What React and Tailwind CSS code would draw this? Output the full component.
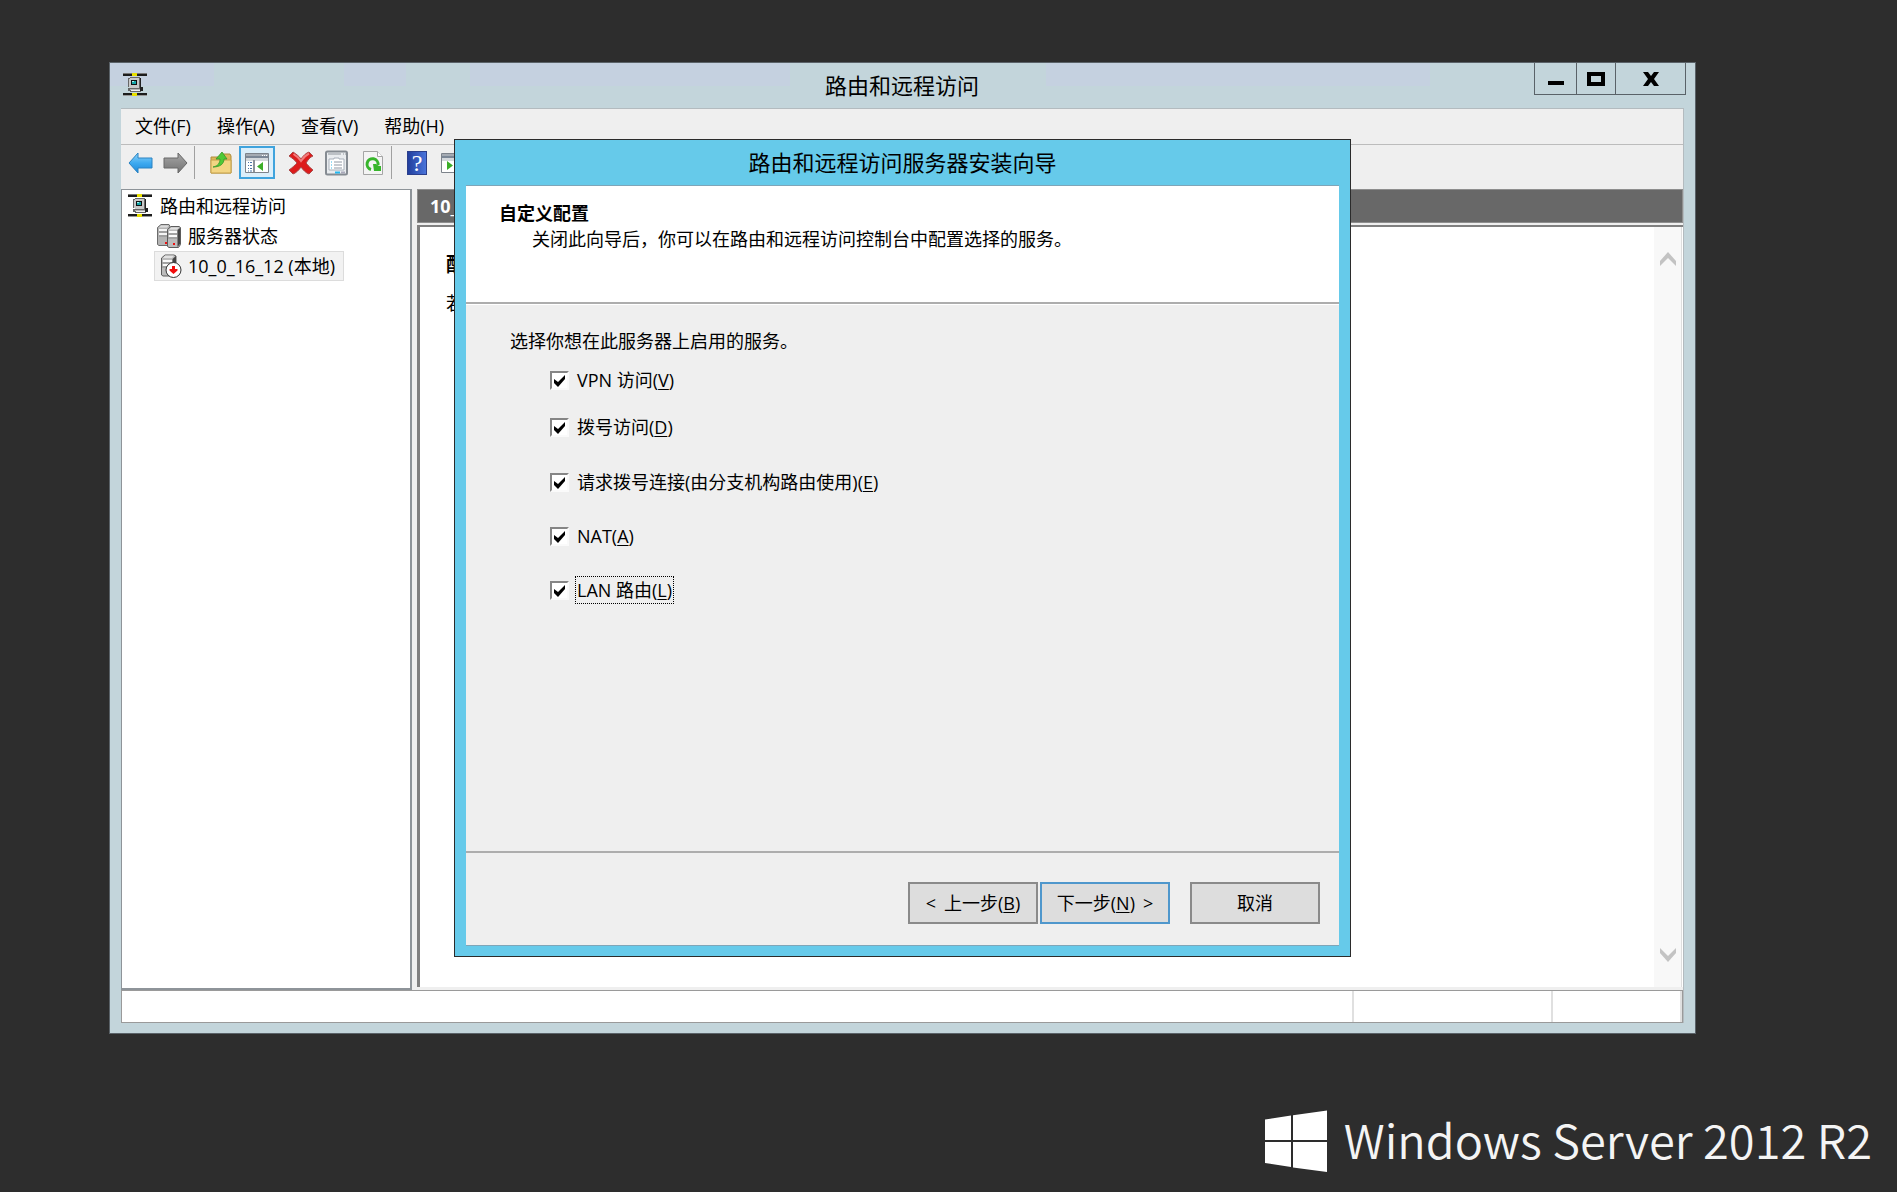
import { useState } from 'react';

const menus = ["文件(F)", "操作(A)", "查看(V)", "帮助(H)"];

const services = [
  { id: "vpn", label: "VPN 访问", accessKey: "V", className: "mb-[19px]" },
  { id: "dialup", label: "拨号访问", accessKey: "D", className: "mb-[27px]" },
  { id: "demand", label: "请求拨号连接(由分支机构路由使用)", accessKey: "E", className: "mb-[26px]" },
  { id: "nat", label: "NAT", accessKey: "A", className: "mb-[26px]" },
  { id: "lan", label: "LAN 路由", accessKey: "L", className: "" },
];

function NetworkIcon() {
  return (
    <svg width="24" height="24" viewBox="0 0 24 24" shapeRendering="crispEdges" aria-hidden="true">
      <path d="M0 0h24v1H0z" fill="#777" />
      <path d="M0 1h24v2H0zM0 20h24v2H0z" fill="#1c1c1c" />
      <path d="M0 22h24v1H0z" fill="#999" />
      <path d="M9 0h5v3H9zM9 20h5v3H9z" fill="#e8e000" />
      <path d="M7 4h10v1h1v9h1v4h-1v1H7v-1H5v-3h2v-1H5V5h2z" fill="#666" />
      <path d="M17 5h1v9h2v4h-3z" fill="#222" />
      <path d="M7 5h9v10H7zM6 6h10v8H6z" fill="#c9c9c9" />
      <path d="M8 7h6v5H8z" fill="#111" />
      <path d="M9 8h4v3H9z" fill="#16a5a8" />
      <path d="M9 8h2v1H9z" fill="#a8f0ee" />
      <path d="M7 16h10v1H7z" fill="#b5b5b5" />
      <path d="M8 17h9v1H8z" fill="#eee" />
    </svg>
  );
}

function ServersIcon() {
  return (
    <svg width="24" height="24" viewBox="0 0 24 24" aria-hidden="true">
      <path d="M.5 3.500 4 .500h8l1 2v18l-2 1H2l-1.500-1z" fill="#b4b4b4" stroke="#6b6b6b" />
      <path d="M4 1.500h8l-2 2H2z" fill="#ddd" />
      <path d="M2 6h8M2 10h8" stroke="#f5f5f5" strokeWidth="2" />
      <path d="M2 8h9M2 12h9" stroke="#8a8a8a" />
      <path d="M10.500 5.500 14 2.500h8l1.500 1v17l-2 3h-9.500l-1.500-1z" fill="#bcbcbc" stroke="#5c5c5c" />
      <path d="M14 3.500h8l-2 2h-8z" fill="#e2e2e2" />
      <path d="M20.500 6 23 4v16l-2.500 3z" fill="#444" />
      <path d="M12 8h8M12 12h8" stroke="#fafafa" strokeWidth="2" />
      <path d="M11 10h9M11 14h9" stroke="#8a8a8a" />
      <path d="M8 18h2v2H8zM16 19h2v2h-2z" fill="#e11" />
    </svg>
  );
}

function ServerDownIcon() {
  return (
    <svg width="22" height="24" viewBox="0 0 22 24" aria-hidden="true">
      <path d="M1.500 4 5 1h9l2 1v19l-2 1H3l-1.500-1z" fill="#bcbcbc" stroke="#5c5c5c" />
      <path d="M5 1.500h9l-2 2.500H3z" fill="#e2e2e2" />
      <path d="M12.500 5 16 2v8h-3.500z" fill="#444" />
      <path d="M3 7h9M3 11h9" stroke="#fafafa" strokeWidth="2" />
      <path d="M2 9h10M2 13h8" stroke="#8a8a8a" />
      <circle cx="13.500" cy="16" r="7.500" fill="#fff" stroke="#333" />
      <path d="M12 12h3v3h2.500v1.500l-4 3.500-4-3.500V15H12z" fill="#f20d0d" />
    </svg>
  );
}

function ArrowIcon({ forward }) {
  return (
    <svg width="26" height="24" viewBox="0 0 26 24" aria-hidden="true">
      <defs>
        <linearGradient id={forward ? "fwd" : "back"} x1="0" y1="0" x2="0" y2="1">
          <stop offset="0" stopColor={forward ? "#a8a8a8" : "#8fd3f8"} />
          <stop offset="0.5" stopColor={forward ? "#8c8c8c" : "#3eaaf0"} />
          <stop offset="1" stopColor={forward ? "#747474" : "#1b86d8"} />
        </linearGradient>
      </defs>
      <path
        d={forward ? "M24 12 15 2v5H1v10h14v5z" : "M2 12 11 2v5h14v10H11v5z"}
        fill={forward ? "url(#fwd)" : "url(#back)"}
        stroke={forward ? "#686868" : "#2a83c2"}
        strokeLinejoin="round"
      />
    </svg>
  );
}

function FolderUpIcon() {
  return (
    <svg width="24" height="24" viewBox="0 0 24 24" aria-hidden="true">
      <path d="M2 6h10l1-3h8l1 2v17H2z" fill="#dcb75a" stroke="#b08c38" />
      <path d="M2 9h20v13H2z" fill="#f3d583" stroke="#c6a14a" />
      <path d="M4 16c5-1 7-4 7-8H7l6-7 5 7h-3c0 5-4 8-11 8z" fill="#4fc936" stroke="#35952a" strokeWidth="0.800" />
    </svg>
  );
}

function ConsoleIcon({ play }) {
  return (
    <svg width="24" height="20" viewBox="0 0 24 20" aria-hidden="true">
      <path d="M.5.500h23v19H.5z" fill="#fff" stroke="#7d838b" />
      <path d="M1 1h22v2H1z" fill="#a5abb3" />
      <path d="M1 3h22v2H1z" fill="#7b8796" />
      <path d="M17 2h1v1h-1zM19 2h1v1h-1zM21 2h1v1h-1z" fill="#fff" />
      <path d="M1 5h22v3H1z" fill="#d4d8dc" />
      {!play && <path d="M9 7v12" stroke="#8d939b" strokeWidth="2" />}
      {!play && <path d="M3 9.500h4M3 12.500h4M3 15.500h4M3 18h4" stroke="#4b74a8" strokeDasharray="1 1 3" />}
      {play ? <path d="M6 8v9l6-4.500z" fill="#3cae28" /> : <path d="M18 9v9l-6-4.500z" fill="#3cae28" />}
    </svg>
  );
}

function DeleteIcon() {
  return (
    <svg width="26" height="26" viewBox="0 0 26 26" aria-hidden="true">
      <path
        d="M5 2c3 2 6 4 8 7 2-3 5-6 8-7l4 4c-3 1-5 4-7 7 2 2 4 5 7 7l-4 4c-3-1-6-4-8-7-2 3-5 6-8 7l-4-4c3-2 6-5 8-7-2-3-5-5-8-7z"
        fill="#dd1c1c"
        stroke="#a94a4a"
      />
      <path d="M5.500 4c3 2 5.500 4 7.500 7 2-3 5-6 8-7.500" fill="none" stroke="#f27c7c" strokeWidth="2" />
    </svg>
  );
}

function PropertiesIcon() {
  return (
    <svg width="24" height="26" viewBox="0 0 24 26" aria-hidden="true">
      <rect x="1" y="1.500" width="21" height="23" rx="1.500" fill="#e9ecef" stroke="#858b92" strokeWidth="2" />
      <path d="M3 4h13M18 4h1M20 4h1" stroke="#8f959c" />
      <path d="M4 9h5V8h5v1h5v11H4z" fill="#fff" stroke="#a8b0ba" />
      <path d="M6 12h1M6 15h1M6 18h1" stroke="#35b8e8" />
      <path d="M9 12h8M9 15h8M9 18h8" stroke="#9098a4" />
      <path d="M10 22.500h5" stroke="#22b8f0" strokeWidth="2" />
      <path d="M16 22.500h4" stroke="#aab" strokeWidth="2" />
    </svg>
  );
}

function RefreshIcon() {
  return (
    <svg width="22" height="26" viewBox="0 0 22 26" aria-hidden="true">
      <path d="M1.500 1.500h14l5 5v18h-19z" fill="#f4f4f4" stroke="#a5a5a5" />
      <path d="M15.500 1.500v5h5" fill="#fff" stroke="#a5a5a5" />
      <path d="M9 19.500A5.500 5.500 0 1 1 16 15" fill="none" stroke="#37b52b" strokeWidth="3" />
      <path d="M11 14h3l3 2h2v5h-7z" fill="#37b52b" />
    </svg>
  );
}

function HelpIcon() {
  return (
    <span className="flex h-6 w-5 items-center justify-center border border-[#2b3f8c] bg-linear-to-r from-[#223f9e] to-[#4a74da] font-['Liberation_Serif',serif] text-2xl leading-6 text-white">
      ?
    </span>
  );
}

function ToolButton({ label, active, children }) {
  return (
    <button
      type="button"
      aria-label={label}
      className={`flex h-[33px] w-9 shrink-0 items-center justify-center ${active ? "border-2 border-[#3fa3dd] bg-[#dbeefa]" : ""}`}
    >
      {children}
    </button>
  );
}

function Separator({ className }) {
  return <div className={`h-[33px] shrink-0 border-l border-[#a0a0a0] ${className}`} />;
}

function ScrollArrow({ down }) {
  return (
    <svg width="18" height="14" viewBox="0 0 18 14" aria-hidden="true">
      <path d={down ? "M1 0v5l8 9 8-9V0L9 8z" : "M1 14V9l8-9 8 9v5L9 6z"} fill="#c3c3c3" />
    </svg>
  );
}

function ServiceOption({ service, checked, focused, onChange }) {
  return (
    <div className={`flex h-7 items-center ${service.className}`}>
      <span className="relative mr-[6px] h-[19px] w-[19px]">
        <input
          id={service.id}
          type="checkbox"
          checked={checked}
          onChange={onChange}
          className="block h-[19px] w-[19px] appearance-none border-2 border-t-[#858585] border-r-[#fafafa] border-b-[#fafafa] border-l-[#858585] bg-white"
        />
        {checked && (
          <svg className="pointer-events-none absolute top-1 left-1" width="12" height="12" viewBox="0 0 12 12" aria-hidden="true">
            <path d="M0 4v4l4 4 7-8V0L4 7z" fill="#000" />
          </svg>
        )}
      </span>
      <label
        htmlFor={service.id}
        className={`border px-px leading-[26px] ${focused ? "border-dotted border-black" : "border-transparent"}`}
      >
        {service.label}(<u className="underline-offset-2">{service.accessKey}</u>)
      </label>
    </div>
  );
}

function Wizard() {
  const [checked, setChecked] = useState({ vpn: true, dialup: true, demand: true, nat: true, lan: true });

  const toggle = (id) => {
    setChecked(prev => ({ ...prev, [id]: !prev[id] }));
  };

  const buttonClass = "flex h-[42px] w-[130px] items-center justify-center gap-2 border-2 bg-[#dddddd]";

  return (
    <section
      role="dialog"
      aria-labelledby="wizard-title"
      className="absolute inset-x-[344px] inset-y-[76px] flex flex-col border border-[#2b2b2b] bg-[#66caea] px-[11px] pb-[10px]"
    >
      <h2 id="wizard-title" className="h-[45px] text-center text-[22px] leading-[44px]">
        路由和远程访问服务器安装向导
      </h2>
      <div className="flex flex-1 flex-col border-y border-[#7fa5b8] bg-[#efefef]">
        <div className="h-[118px] border-b-2 border-[#adadad] bg-white pt-[14px] pl-[33px]">
          <h3 className="leading-[26px] font-bold">自定义配置</h3>
          <p className="pl-[33px] leading-[26px]">关闭此向导后，你可以在路由和远程访问控制台中配置选择的服务。</p>
        </div>

        <div className="flex-1 border-t border-white pt-[22px] pl-11">
          <p className="mb-[11px] leading-7">选择你想在此服务器上启用的服务。</p>
          <div className="pl-10">
            {services.map((service) => (
              <ServiceOption
                key={service.id}
                service={service}
                checked={checked[service.id]}
                focused={service.id === "lan"}
                onChange={() => toggle(service.id)}
              />
            ))}
          </div>
        </div>

        <div className="flex h-[94px] justify-end border-t-2 border-[#adadad] pt-[29px] pr-[19px]">
          <button type="button" className={`${buttonClass} mr-[2px] border-[#8a8a8a]`}>
            <span>&lt;</span>
            <span>上一步(<u className="underline-offset-2">B</u>)</span>
          </button>
          <button type="button" className={`${buttonClass} mr-5 border-[#4f97cc]`}>
            <span>下一步(<u className="underline-offset-2">N</u>)</span>
            <span>&gt;</span>
          </button>
          <button type="button" className={`${buttonClass} border-[#8a8a8a]`}>取消</button>
        </div>
      </div>
    </section>
  );
}

function App() {
  return (
    <div className="flex min-h-screen flex-col bg-[#2d2d2d] pt-[62px] font-['Open_Sans','Noto_Sans_CJK_SC',sans-serif] text-lg text-black">
      <main className="relative mr-[201px] ml-[109px] flex flex-1 flex-col border border-[#5a6268] bg-[#c3d5db] px-[11px] pb-[10px]">
        <header className="-mx-[11px] flex h-[45px] bg-[linear-gradient(90deg,#c5d1e0_0_104px,transparent_104px_234px,#c5d1e0_234px_296px,transparent_296px_360px,#c5d1e0_360px_680px,transparent_680px_936px,#c5d1e0_936px_1320px,transparent_1320px)] bg-[length:100%_23px] bg-no-repeat">
          <div className="w-[160px] pt-2.5 pl-[13px]">
            <NetworkIcon />
          </div>
          <h1 className="flex-1 text-center text-[22px] leading-[44px]">路由和远程访问</h1>
          <div className="mr-[9px] flex h-8 border-r border-b border-[#5a6268]">
            <button type="button" aria-label="最小化" className="w-[42px] border-l border-[#5a6268] pt-[9px]">
              <span className="mx-auto block h-1 w-4 bg-black" />
            </button>
            <button type="button" aria-label="最大化" className="w-[39px] border-l border-[#5a6268]">
              <span className="mx-auto block h-[14px] w-[18px] border-4 border-black" />
            </button>
            <button type="button" aria-label="关闭" className="w-[70px] border-l border-[#5a6268]">
              <svg className="mx-auto" width="16" height="14" viewBox="0 0 16 14" aria-hidden="true">
                <path d="M0 0h5l3 4 3-4h5l-5 7 5 7h-5l-3-4-3 4H0l5-7z" fill="#000" />
              </svg>
            </button>
          </div>
        </header>

        <div className="flex flex-1 flex-col border-t border-r border-[#b3bbbf] bg-[#efefef]">
          <nav className="flex h-9 items-center gap-[26px] border-b border-[#bcbcbc] pb-px pl-[14px]">
            {menus.map((menu) => (
              <button key={menu} type="button">{menu}</button>
            ))}
          </nav>

          <div className="flex h-11 items-start overflow-hidden pt-px pl-px">
            <ToolButton label="后退"><ArrowIcon /></ToolButton>
            <ToolButton label="前进"><ArrowIcon forward /></ToolButton>
            <Separator className="w-[9px]" />
            <ToolButton label="上一级"><FolderUpIcon /></ToolButton>
            <ToolButton label="显示控制台树" active><ConsoleIcon /></ToolButton>
            <div className="w-2 shrink-0" />
            <ToolButton label="删除"><DeleteIcon /></ToolButton>
            <ToolButton label="属性"><PropertiesIcon /></ToolButton>
            <ToolButton label="刷新"><RefreshIcon /></ToolButton>
            <Separator className="w-2" />
            <ToolButton label="帮助"><HelpIcon /></ToolButton>
            <ToolButton label="显示操作窗格"><ConsoleIcon play /></ToolButton>
          </div>

          <div className="flex flex-1">
            <aside className="w-[291px] border-t border-r-2 border-b-2 border-l border-[#8e9499] bg-white pt-px">
              <ul className="leading-[30px]">
                <li className="flex h-[30px] items-center gap-2 pl-[6px]"><NetworkIcon />路由和远程访问</li>
                <li className="flex h-[30px] items-center gap-[7px] pl-[35px]"><ServersIcon />服务器状态</li>
                <li className="flex h-[30px] pl-8">
                  <span className="flex items-center gap-[6px] border border-[#dcdcdc] bg-[#f2f2f2] pr-2 pl-[5px] leading-7">
                    <ServerDownIcon />10_0_16_12 (本地)
                  </span>
                </li>
              </ul>
            </aside>

            <section className="ml-[5px] flex flex-1 flex-col">
              <h2 className="mb-[2px] h-[34px] border border-[#8e8e8e] bg-[#686868] pl-3 leading-8 font-bold text-white">10_0</h2>
              <div className="mb-[3px] flex flex-1 border-t-2 border-l-[3px] border-[#808080] bg-white">
                <div className="flex-1 pt-[25px] pl-[26px]">
                  <h3 className="mb-3 text-xl leading-[26px] font-bold">配置</h3>
                  <p className="leading-[26px]">若要</p>
                </div>
                <div className="mr-px flex w-7 flex-col items-center justify-between border-r border-[#dedede] bg-[#f8f8f8] py-[25px]">
                  <ScrollArrow />
                  <ScrollArrow down />
                </div>
              </div>
            </section>
          </div>

          <footer className="flex h-[33px] border border-[#9a9a9a] bg-white">
            <div className="flex-1" />
            <div className="w-[199px] border-l-2 border-[#e0e0e0]" />
            <div className="w-[131px] border-x-2 border-[#e0e0e0]" />
          </footer>
        </div>

        <Wizard />
      </main>

      <div className="flex h-[158px] items-start justify-end gap-[17px] pt-[76px] pr-[25px] text-white">
        <svg width="62" height="63" viewBox="0 0 62 63" aria-hidden="true">
          <path d="M0 9.500 26 5.500V30H0zM28 5.200 62 .500V30H28zM0 32h26v25L0 53zM28 32h34v30L28 57.500z" fill="#fff" />
        </svg>
        <p className="font-['Noto_Sans_CJK_SC',sans-serif] text-[47px] leading-[58px] font-[350] whitespace-nowrap text-[#f4f4f4]">Windows Server 2012 R2</p>
      </div>
    </div>
  );
}

export default App
